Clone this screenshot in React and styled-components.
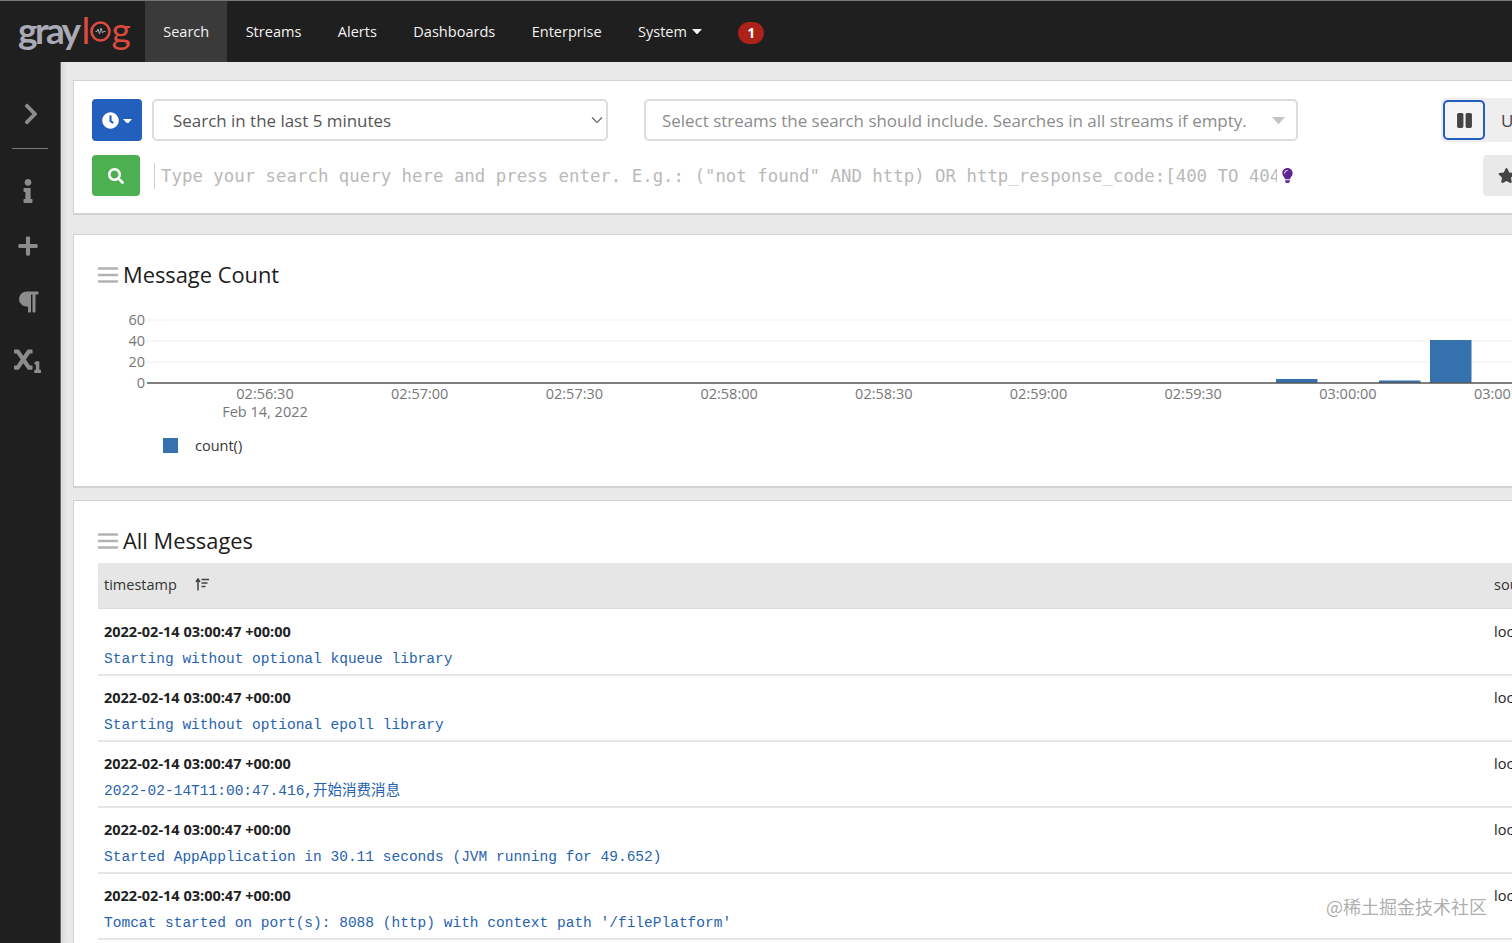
import React from "react";
import styled, { createGlobalStyle } from "styled-components";
import { FaClock, FaSearch, FaInfo, FaPlus, FaParagraph, FaSubscript, FaChevronRight, FaPause, FaStar, FaLightbulb } from "react-icons/fa";

const UI = `"Open Sans", "Noto Sans CJK SC", sans-serif`;

const GlobalStyle = createGlobalStyle`
  html, body { margin: 0; padding: 0; height: 100%; overflow: hidden; background: #e8e8e8; }
  body { font-family: ${UI}; }
  * { box-sizing: border-box; }
`;

const Page = styled.div`
  position: relative;
  width: 1512px;
  height: 943px;
  overflow: hidden;
  display: flex;
  flex-direction: column;
`;

const Navbar = styled.nav`
  flex: none;
  height: 62px;
  display: flex;
  align-items: stretch;
  background: #1f1f1f;
  border-top: 1px solid #777;
`;

const Logo = styled.div`
  width: 145px;
  padding: 0 0 5px 18px;
  display: flex;
  align-items: center;
  font-family: Lato, sans-serif;
  font-size: 37px;
  font-weight: 700;
  letter-spacing: -2.6px;
  color: #a9aab4;
`;

const LogoRed = styled.span`
  color: #dd4a40;
  font-weight: 400;
  margin-left: ${(p) => p.$ml || 0}px;
`;

const NavItem = styled.div`
  display: flex;
  align-items: center;
  gap: 5px;
  padding: 0 18.2px 2px;
  font-size: 14.55px;
  color: #f2f2f2;
  background: ${(p) => (p.$active ? "#3a3a3a" : "transparent")};
`;

const Badge = styled.div`
  align-self: center;
  width: 26px;
  height: 22px;
  margin: 2px 0 0 18px;
  border-radius: 11px;
  background: #ad2218;
  color: #fff;
  font-size: 14px;
  font-weight: 700;
  display: flex;
  align-items: center;
  justify-content: center;
`;

const Body = styled.div`
  flex: 1;
  display: flex;
  min-height: 0;
`;

const Sidebar = styled.aside`
  flex: none;
  width: 61px;
  background: #1f1f1f;
  border-right: 1px solid #666;
  display: flex;
  flex-direction: column;
  align-items: center;
  color: #8c8c8c;
  padding-top: 40px;
`;

const SideIcon = styled.div`
  width: 100%;
  height: ${(p) => p.$h || 56}px;
  padding: ${(p) => (p.$h ? "0 0 0 1px" : "0 5px 0 0")};
  display: flex;
  align-items: center;
  justify-content: center;
`;

const SideRule = styled.div`
  width: 36px;
  height: 1px;
  margin: 22px 0 13px 0;
  background: #777;
`;

const Main = styled.main`
  flex: none;
  width: 1800px;
  padding: 18px 0 0 12px;
  background: linear-gradient(90deg, #d9d9d9 0, #e9e9e9 6px);
`;

const Card = styled.section`
  background: #fff;
  border: 1px solid #d2d2d2;
  border-bottom-width: 2px;
  height: ${(p) => p.$h}px;
  margin-bottom: ${(p) => p.$mb || 0}px;
  padding: ${(p) => p.$pad || "0 0 0 24px"};
`;

const SearchRow = styled.div`
  display: flex;
  align-items: center;
  height: ${(p) => p.$h}px;
  margin-bottom: ${(p) => p.$mb || 0}px;
`;

const TimeButton = styled.div`
  width: 50px;
  height: 42px;
  margin-right: 10px;
  border-radius: 4px;
  background: #2360bd;
  color: #fff;
  display: flex;
  align-items: center;
  justify-content: center;
  gap: 4px;
`;

const Select = styled.div`
  width: ${(p) => p.$w}px;
  height: 42px;
  margin-right: ${(p) => p.$mr}px;
  padding: ${(p) => p.$pad};
  border: 2px solid #dcdcdc;
  border-radius: 5px;
  background: #fff;
  display: flex;
  align-items: center;
  justify-content: space-between;
  font-size: 16.95px;
  color: ${(p) => p.$color};
`;

const PauseGroup = styled.div`
  display: flex;
  align-items: center;
  width: 120px;
  height: 44px;
  border-radius: 5px;
  background: #eeeeee;
`;

const PauseButton = styled.div`
  width: 42px;
  height: 40px;
  margin-left: 2px;
  border: 2px solid #2360bd;
  border-radius: 5px;
  background: #f4f4f4;
  color: #444;
  display: flex;
  align-items: center;
  justify-content: center;
`;

const UpdateLabel = styled.span`
  margin-left: 16px;
  font-size: 17px;
  color: #444;
`;

const SearchButton = styled.div`
  width: 48px;
  height: 41px;
  border-radius: 4px;
  background: #4caf50;
  color: #fff;
  display: flex;
  align-items: center;
  justify-content: center;
`;

const QueryDivider = styled.div`
  width: 1px;
  height: 26px;
  margin: 0 6px 0 14px;
  background: #cfcfcf;
`;

const QueryText = styled.div`
  width: 1116px;
  overflow: hidden;
  white-space: nowrap;
  font-family: "DejaVu Sans Mono", monospace;
  font-size: 17.39px;
  color: #b9b9b9;
`;

const BulbIcon = styled.div`
  width: 206px;
  padding-left: 3px;
  display: flex;
  color: #5f2590;
`;

const StarButton = styled.div`
  width: 80px;
  height: 41px;
  padding-left: 15px;
  border-radius: 4px;
  background: #e9e9e9;
  color: #444;
  display: flex;
  align-items: center;
`;

const TitleRow = styled.div`
  display: flex;
  align-items: center;
  gap: 5px;
  padding-top: ${(p) => p.$top}px;
`;

const Title = styled.h2`
  margin: 0;
  font-size: 21.85px;
  font-weight: 400;
  line-height: 31px;
  color: #1d1d1d;
`;

const Chart = styled.svg`
  display: block;
  margin: ${(p) => p.$m};
  font-family: ${UI};
`;

const Table = styled.div`
  margin-top: 7px;
`;

const HeadRow = styled.div`
  display: grid;
  grid-template-columns: 1390px 1fr;
  height: 46px;
  margin-bottom: 1px;
  align-items: center;
  padding: 0 0 2px 6px;
  background: #e6e6e6;
  border-bottom: 1px solid #dcdcdc;
  font-size: 14.5px;
  color: #333;
`;

const HeadCell = styled.div`
  display: flex;
  align-items: center;
  gap: 18px;
`;

const Row = styled.div`
  display: grid;
  grid-template-columns: 1390px 1fr;
  height: 66px;
  padding: 12px 0 0 6px;
  border-bottom: 2px solid #e6e6e6;
`;

const Stamp = styled.div`
  font-size: 14.5px;
  line-height: 20px;
  font-weight: 700;
  color: #222;
`;

const Message = styled.div`
  margin-top: 8px;
  font-family: "Liberation Mono", "Noto Sans CJK SC", monospace;
  font-size: 14.53px;
  line-height: 19px;
  white-space: pre;
  color: #2763ad;
`;

const Source = styled.div`
  font-size: 14.5px;
  line-height: 20px;
  color: #222;
`;

const Watermark = styled.div`
  position: absolute;
  left: 1326px;
  top: 893px;
  font-family: "Noto Sans CJK SC", sans-serif;
  font-size: 18px;
  line-height: 26px;
  white-space: nowrap;
  color: rgba(120, 120, 120, 0.62);
`;

const GraylogRing = () => (
  <svg width="21" height="21" viewBox="0 0 21 21" style={{ margin: "5px 1px 0 2px" }}>
    <circle cx="10.500" cy="10.500" r="9" fill="none" stroke="#dd4a40" strokeWidth="2.600" />
    <path d="M5.500 10.500h1.500l1-2.500 1.500 5 1.500-6 1.500 5 1-1.500h2" fill="none" stroke="#a9aab4" strokeWidth="1" />
  </svg>
);

const Caret = ({ w = 10, color = "currentColor" }) => (
  <svg width={w} height={w * 0.55} viewBox="0 0 10 5.500" style={{ marginTop: 2 }}>
    <path d="M0 0h10L5 5.500z" fill={color} />
  </svg>
);

const Hamburger = () => (
  <svg width="20" height="16" viewBox="0 0 20 16">
    <path d="M0 1.500h20M0 8h20M0 14.500h20" stroke="#b3b3b3" strokeWidth="2.600" />
  </svg>
);

const SortIcon = () => (
  <svg width="14" height="13" viewBox="0 0 14 13">
    <path d="M3 12.500V2M1 4l2-3 2 3" fill="none" stroke="#444" strokeWidth="1.500" />
    <path d="M6.500 1.500H14M6.500 5H12.500M6.500 8.500H10.500" stroke="#444" strokeWidth="1.300" />
  </svg>
);

const ticks = ["02:56:30", "02:57:00", "02:57:30", "02:58:00", "02:58:30", "02:59:00", "02:59:30", "03:00:00", "03:00:30"];
const yLabels = [
  { label: "60", y: 15 },
  { label: "40", y: 36 },
  { label: "20", y: 57 },
  { label: "0", y: 78 },
];
const bars = [
  { x: 1178, y: 74, h: 4 },
  { x: 1281, y: 75.5, h: 2.5 },
  { x: 1332, y: 35, h: 43 },
];

const MessageChart = () => (
  <Chart $m="15px 0 0 0" width="1500" height="160" viewBox="0 0 1500 160">
    {yLabels.map((t) => (
      <g key={t.label}>
        {t.label !== "0" && <line x1="49" x2="1500" y1={t.y} y2={t.y} stroke="#eeeeee" />}
        <text x="47" y={t.y + 5} textAnchor="end" fontSize="14.5" fill="#777">{t.label}</text>
      </g>
    ))}
    {bars.map((b) => (
      <rect key={b.x} x={b.x} y={b.y} width="41.500" height={b.h} fill="#3572ad" />
    ))}
    <line x1="49" x2="1500" y1="78" y2="78" stroke="#555" strokeWidth="1.500" />
    {ticks.map((t, i) => (
      <text key={t} x={167 + i * 154.7} y="94" textAnchor="middle" fontSize="14.5" fill="#777">{t}</text>
    ))}
    <text x="167" y="112" textAnchor="middle" fontSize="14.5" fill="#777">Feb 14, 2022</text>
    <rect x="65" y="133" width="15" height="15" fill="#3572ad" />
    <text x="97" y="146" fontSize="14.5" fill="#333">count()</text>
  </Chart>
);

const messages = [
  "Starting without optional kqueue library",
  "Starting without optional epoll library",
  "2022-02-14T11:00:47.416,开始消费消息",
  "Started AppApplication in 30.11 seconds (JVM running for 49.652)",
  "Tomcat started on port(s): 8088 (http) with context path '/filePlatform'",
];

const navItems = ["Streams", "Alerts", "Dashboards", "Enterprise"];

const App = () => {
  return (
    <Page>
      <GlobalStyle />
      <Navbar>
        <Logo>
          gray<LogoRed $ml={3}>l</LogoRed><GraylogRing /><LogoRed>g</LogoRed>
        </Logo>
        <NavItem $active>Search</NavItem>
        {navItems.map((item) => (
          <NavItem key={item}>{item}</NavItem>
        ))}
        <NavItem>System <Caret /></NavItem>
        <Badge>1</Badge>
      </Navbar>
      <Body>
        <Sidebar>
          <SideIcon $h={24}><FaChevronRight size={24} /></SideIcon>
          <SideRule />
          <SideIcon><FaInfo size={24} style={{ marginTop: 2 }} /></SideIcon>
          <SideIcon><FaPlus size={22} /></SideIcon>
          <SideIcon><FaParagraph size={24} /></SideIcon>
          <SideIcon><FaSubscript size={27} style={{ marginTop: 2 }} /></SideIcon>
        </Sidebar>
        <Main>
          <Card $h={135} $mb={19} $pad="18px 0 0 18px">
            <SearchRow $h={42} $mb={14}>
              <TimeButton><FaClock size={17} /><Caret w={9} /></TimeButton>
              <Select $w={456} $mr={36} $pad="0 3px 0 19px" $color="#555">
                Search in the last 5 minutes
                <svg width="12" height="8" viewBox="0 0 12 8"><path d="M1 1.500l5 5 5-5" fill="none" stroke="#666" strokeWidth="1.200" /></svg>
              </Select>
              <Select $w={654} $mr={143} $pad="0 11px 0 16px" $color="#8c8c8c">
                Select streams the search should include. Searches in all streams if empty.
                <Caret w={13} color="#c4c4c4" />
              </Select>
              <PauseGroup>
                <PauseButton><FaPause size={17} /></PauseButton>
                <UpdateLabel>Update</UpdateLabel>
              </PauseGroup>
            </SearchRow>
            <SearchRow $h={41}>
              <SearchButton><FaSearch size={16} /></SearchButton>
              <QueryDivider />
              <QueryText>Type your search query here and press enter. E.g.: ("not found" AND http) OR http_response_code:[400 TO 404</QueryText>
              <BulbIcon><FaLightbulb size={15} /></BulbIcon>
              <StarButton><FaStar size={17} /></StarButton>
            </SearchRow>
          </Card>
          <Card $h={254} $mb={12}>
            <TitleRow $top={24}>
              <Hamburger />
              <Title>Message Count</Title>
            </TitleRow>
            <MessageChart />
          </Card>
          <Card $h={500}>
            <TitleRow $top={24}>
              <Hamburger />
              <Title>All Messages</Title>
            </TitleRow>
            <Table>
              <HeadRow>
                <HeadCell>timestamp <SortIcon /></HeadCell>
                <HeadCell>source</HeadCell>
              </HeadRow>
              {messages.map((msg) => (
                <Row key={msg}>
                  <div>
                    <Stamp>2022-02-14 03:00:47 +00:00</Stamp>
                    <Message>{msg}</Message>
                  </div>
                  <Source>localhost</Source>
                </Row>
              ))}
            </Table>
          </Card>
        </Main>
      </Body>
      <Watermark>@稀土掘金技术社区</Watermark>
    </Page>
  );
};

export default App;
